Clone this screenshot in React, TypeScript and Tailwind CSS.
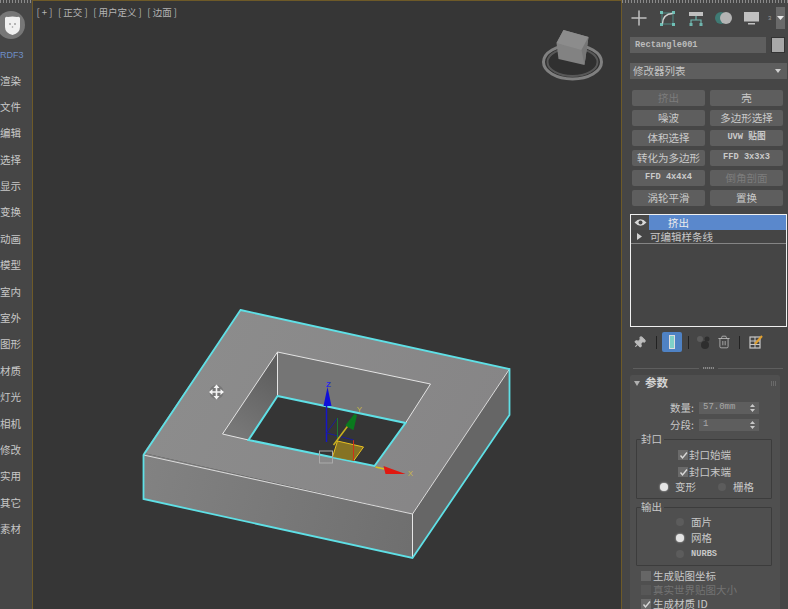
import React from 'react';
import { Plus, Pin, Trash2 } from 'lucide-react';

const menuItems = ['渲染', '文件', '编辑', '选择', '显示', '变换', '动画', '模型', '室内', '室外', '图形', '材质', '灯光', '相机', '修改', '实用', '其它', '素材'];

const modifierButtons: [string, boolean][] = [
  ['挤出', true], ['壳', false],
  ['噪波', false], ['多边形选择', false],
  ['体积选择', false], ['UVW 贴图', false],
  ['转化为多边形', false], ['FFD 3x3x3', false],
  ['FFD 4x4x4', false], ['倒角剖面', true],
  ['涡轮平滑', false], ['置换', false],
];

const Radio = ({ on }: { on?: boolean }) => (
  <span className={`block w-2 h-2 rounded-full ${on ? 'bg-[#e4e4e4] shadow-[0_0_2px_#ddd]' : 'bg-[#5c5c5c]'}`}></span>
);

const Check = () => (
  <span className="w-2.5 h-2.5 bg-[#6a6a6a] flex items-center justify-center shrink-0">
    <svg width="9" height="9" viewBox="0 0 9 9"><path d="M1.5 4.5 L3.5 7 L8 1.5" stroke="#d8d8d8" strokeWidth="1.4" fill="none" /></svg>
  </span>
);

const Spinner = ({ value }: { value: string }) => (
  <div className="w-[60px] h-[12px] bg-[#5e5e5e] flex items-center justify-between pl-1 pr-1 text-[9px] text-[#a8a8a8] font-['Liberation_Mono']">
    <span>{value}</span>
    <svg width="5" height="10" viewBox="0 0 5 10"><path d="M0 4 L2.5 1 L5 4 Z M0 6 L2.5 9 L5 6 Z" fill="#c8c8c8" /></svg>
  </div>
);

const Scene = () => (
  <svg viewBox="33 0 587 609" className="w-full h-full block">
    <defs>
      <linearGradient id="frontWall" x1="143" y1="470" x2="412" y2="540" gradientUnits="userSpaceOnUse">
        <stop offset="0" stopColor="#828282" />
        <stop offset="1" stopColor="#6f6f6f" />
      </linearGradient>
      <linearGradient id="topFace" x1="200" y1="340" x2="480" y2="480" gradientUnits="userSpaceOnUse">
        <stop offset="0" stopColor="#8c8c8c" />
        <stop offset="1" stopColor="#868586" />
      </linearGradient>
      <linearGradient id="holeLeft" x1="235" y1="430" x2="275" y2="370" gradientUnits="userSpaceOnUse">
        <stop offset="0" stopColor="#777777" />
        <stop offset="1" stopColor="#5f5f5f" />
      </linearGradient>
    </defs>

    {/* view cube */}
    <g className="blur-[0.7px]">
      <ellipse cx="572" cy="62" rx="29" ry="17" fill="#303030" stroke="#808080" strokeWidth="3" />
      <ellipse cx="572" cy="62" rx="25" ry="14" fill="none" stroke="#585858" strokeWidth="2" />
      <path d="M563 30 L588 37 L584 65 L558 59 L556 43 Z" fill="#828282" />
      <path d="M563 30 L588 37 L581 50 L556 43 Z" fill="#8c8c8c" />
      <path d="M581 50 L588 37 L584 65 Z" fill="#767676" />
    </g>

    {/* outer walls */}
    <path d="M143 453 L412 514 L412 558 L143 499 Z" fill="url(#frontWall)" />
    <path d="M412 514 L509 369 L509 415 L412 558 Z" fill="#666666" />
    {/* top face */}
    <path d="M240 310 L509 369 L412 514 L143 453 Z" fill="url(#topFace)" />
    {/* hole */}
    <path d="M277 352 L430 384 L405 423 L277 396 Z" fill="#757575" />
    <path d="M277 352 L277 396 L248 440 L222 434 Z" fill="url(#holeLeft)" />
    <path d="M277 396 L405 423 L374 466 L248 440 Z" fill="#353535" />
    <path d="M277 396 L277 352 L430 384 L405 423 M277 352 L222 434 L248 440" stroke="#e4e4e4" strokeWidth="1" fill="none" />
    <path d="M277 396 L405 423 L374 466 L248 440 Z" stroke="#5fe0e6" strokeWidth="2" fill="none" />
    {/* outlines */}
    <path d="M143 455 L412 514 L509 369" stroke="#dcdcdc" strokeWidth="1" fill="none" />
    <path d="M412 514 L412 558" stroke="#e6e6e6" strokeWidth="1" fill="none" />
    <path d="M240 310 L509 369 L509 415 L412 558 L143 499 L143 455 Z" stroke="#5fe0e6" strokeWidth="1.8" fill="none" />

    {/* gizmo */}
    <path d="M337 441 L363 447 L353 461 L332 457 Z" fill="#8f7a22" fillOpacity="0.9" />
    <path d="M337 441 L363 447 L353 461 M337 441 L332 457" stroke="#e8c020" fill="none" />
    <path d="M353 440 L353 461" stroke="#d03018" />
    <rect x="319" y="451" width="13" height="12" fill="none" stroke="#aaaaaa" />
    <path d="M326 400 L326 442" stroke="#1616c8" strokeWidth="1.5" />
    <path d="M326 433 L353 440 M326 433 L337 418" stroke="#1c1c9a" fill="none" />
    <path d="M337 418 L337 438" stroke="#1c7a30" fill="none" />
    <path d="M327 387 L323 406 L331 406 Z" fill="#1010d8" />
    <path d="M333 445 L348 425" stroke="#c8b020" strokeWidth="1.5" />
    <path d="M347 425 L355 415 L352 428 Z" fill="#0a7a1e" stroke="#0a7a1e" strokeWidth="3" />
    <path d="M375 467 L384 469" stroke="#d8c020" strokeWidth="1.5" />
    <path d="M383 466 L405 474 L385 474 Z" fill="#e01810" />
    <text x="328" y="387" fill="#2a2ae0" fontSize="8" fontFamily="Liberation Sans" fontWeight="bold" textAnchor="middle">Z</text>
    <text x="359" y="412" fill="#c8b848" fontSize="8" fontFamily="Liberation Sans" textAnchor="middle">Y</text>
    <text x="410" y="476" fill="#c8b848" fontSize="8" fontFamily="Liberation Sans" textAnchor="middle">X</text>

    {/* cursor */}
    <circle cx="216" cy="392" r="7" fill="#6a6a6a" fillOpacity="0.6" />
    <path d="M216 386 L216 398 M210 392 L222 392" stroke="#f4f4f4" strokeWidth="1.6" />
    <path d="M216 384.5 L213 388 L219 388 Z M216 399.5 L213 396 L219 396 Z M208.5 392 L212 389 L212 395 Z M223.5 392 L220 389 L220 395 Z" fill="#f4f4f4" />
  </svg>
);

export default function App() {
  return (
    <div className="w-[788px] h-[609px] flex overflow-hidden bg-[#363636] font-['Noto_Sans_CJK_SC','Liberation_Sans',sans-serif] text-[#c8c8c8]">
      {/* Left menu */}
      <aside className="w-[32px] shrink-0 bg-[#464646] flex flex-col items-start overflow-hidden">
        <div className="w-full h-[3px] bg-[repeating-linear-gradient(90deg,#8a8a8a_0,#8a8a8a_1px,#464646_1px,#464646_3px)]"></div>
        <div className="w-[28px] h-[28px] shrink-0 mt-[8px] -ml-[3px] rounded-full bg-[#777777] flex items-center justify-center">
          <svg width="17" height="19" viewBox="0 0 17 19" className="ml-0.5">
            <path d="M1 2 Q2 0 4 1 Q8.5 0 13 1 Q15 0 16 2 L16 11 Q16 17 8.5 19 Q1 17 1 11 Z" fill="#f0f0f0" />
            <circle cx="6" cy="8" r="0.8" fill="#666" />
            <circle cx="11" cy="8" r="0.8" fill="#666" />
            <circle cx="8.5" cy="11" r="0.8" fill="#999" />
          </svg>
        </div>
        <div className="mt-[10px] text-[9px] leading-3 text-[#6f8fc8] font-['Liberation_Sans'] whitespace-nowrap">RDF3</div>
        <div className="mt-[12.5px] flex flex-col gap-[12.4px]">
          {menuItems.map((item) => (
            <div key={item} className="text-[10.5px] leading-[14px] whitespace-nowrap">{item}</div>
          ))}
        </div>
      </aside>

      {/* Viewport */}
      <main className="relative w-[590px] shrink-0 bg-[#363636] border-x-[1.5px] border-[#6e5a28] shadow-[inset_0_1px_0_#6e5a28]">
        <div className="absolute left-[3.5px] top-[6px] flex gap-[5.5px] text-[9.5px] leading-3 text-[#b4b4b4] whitespace-nowrap">
          <span>[ + ]</span>
          <span>[ 正交 ]</span>
          <span>[ 用户定义 ]</span>
          <span>[ 边面 ]</span>
        </div>
        <Scene />
      </main>

      {/* Right panel */}
      <aside className="flex-1 bg-[#464646] flex flex-col pl-2 overflow-hidden text-[10.5px]">
        <div className="-ml-2 h-[3px] shrink-0 bg-[repeating-linear-gradient(90deg,#8a8a8a_0,#8a8a8a_1px,#464646_1px,#464646_3px)]"></div>
        <div className="flex items-center h-[24px] mt-[3px] text-[#c0c0c0]">
          <Plus size={24} strokeWidth={1.5} className="-ml-[3px]" />
          <svg width="15" height="15" viewBox="0 0 15 15" className="ml-[9px]">
            <path d="M2 2 H13 V13 H2 Z" fill="none" stroke="#4f8a84" strokeWidth="1" />
            <path d="M0 0 H3 V3 H0 Z M12 0 H15 V3 H12 Z M0 12 H3 V15 H0 Z M12 12 H15 V15 H12 Z" fill="#6fc0b6" />
            <path d="M2.5 12.5 Q3 3 12.5 2.5" fill="none" stroke="#d0d0d0" strokeWidth="1.4" />
          </svg>
          <svg width="14" height="15" viewBox="0 0 14 15" className="ml-[14px]">
            <rect x="0" y="1" width="14" height="4" fill="#c0c0c0" />
            <path d="M7 5 V9 M2 13 V9 H12 V13" stroke="#6fb5ad" fill="none" strokeWidth="1.2" />
            <path d="M0.5 12 H3.5 V15 H0.5 Z M10.5 12 H13.5 V15 H10.5 Z" fill="#6fb5ad" />
          </svg>
          <svg width="17" height="12" viewBox="0 0 17 12" className="ml-[12px]"><circle cx="6" cy="6" r="6" fill="#3f7a74" /><circle cx="11" cy="6" r="6" fill="#b4b4b4" /></svg>
          <svg width="15" height="13" viewBox="0 0 15 13" className="ml-[12px]"><rect x="0" y="0" width="15" height="9.5" fill="#c0c0c0" /><rect x="4" y="11" width="7" height="1.5" fill="#c0c0c0" /></svg>
          <span className="ml-[9px] text-[6px] text-[#999] font-['Liberation_Sans']">3</span>
          <span className="ml-[5px] w-[9px] h-[22px] bg-[#6a6a6a] flex items-center justify-center shrink-0">
            <svg width="7" height="4" viewBox="0 0 7 4"><path d="M0 0 H7 L3.5 4 Z" fill="#e8e8e8" /></svg>
          </span>
        </div>

        <div className="flex items-center gap-[5px] mt-[7px]">
          <div className="w-[136px] h-[16px] bg-[#5e5e5e] text-[8.7px] leading-[16px] px-[5px] text-[#bcbcbc] font-['Liberation_Mono'] font-bold">Rectangle001</div>
          <div className="w-[14px] h-[16px] bg-[#a8a8a8] border border-[#333]"></div>
        </div>

        <div className="mt-[10px] w-[157px] h-[17px] bg-[#5e5e5e] flex items-center justify-between pl-[3px] pr-[6px] text-[#c4c4c4]">
          <span>修改器列表</span>
          <svg width="6" height="4" viewBox="0 0 6 4"><path d="M0 0 H6 L3 4 Z" fill="#d0d0d0" /></svg>
        </div>

        <div className="mt-[11px] ml-[2px] w-[152px] grid grid-cols-[73px_73px] gap-x-[5px] gap-y-[4px]">
          {modifierButtons.map(([label, disabled]) => (
            <div key={label} className={`h-[16px] rounded-[2px] bg-[#5e5e5e] flex items-center justify-center whitespace-nowrap ${disabled ? 'text-[#7c7c7c]' : 'text-[#cacaca]'} ${label.startsWith('FFD') || label.startsWith('UVW') ? "font-['Liberation_Mono','Noto_Sans_CJK_SC'] text-[8.7px] font-bold" : 'text-[10.5px]'}`}>{label}</div>
          ))}
        </div>

        {/* Modifier stack */}
        <div className="mt-[8px] w-[157px] h-[113px] shrink-0 border border-[#f0f0f0] bg-[#454545]">
          <div className="flex h-[15px]">
            <div className="w-[18px] bg-[#4a4a4a] flex items-center justify-center">
              <svg width="13" height="9" viewBox="0 0 13 9"><path d="M0.5 4.5 Q6.5 -2 12.5 4.5 Q6.5 11 0.5 4.5 Z" fill="#d8d8d8" /><circle cx="6.5" cy="4.5" r="2" fill="#444" /></svg>
            </div>
            <div className="flex-1 bg-[#5a88cc] text-[#ececec] pl-[19px] leading-[15px]">挤出</div>
          </div>
          <div className="flex items-center h-[14px] border-b border-[#858585] leading-[14px]">
            <svg width="5" height="7" viewBox="0 0 5 7" className="ml-1.5 mr-2"><path d="M0 0 L5 3.5 L0 7 Z" fill="#d0d0d0" /></svg>
            <span>可编辑样条线</span>
          </div>
        </div>

        {/* Stack toolbar */}
        <div className="flex items-center h-[20px] mt-[5px] shrink-0 pl-[3px] text-[#bcbcbc]">
          <Pin size={13} className="rotate-45" fill="#bcbcbc" />
          <span className="w-px h-[13px] bg-[#222] ml-[10px]"></span>
          <span className="w-[20px] h-[20px] ml-[5px] bg-[#4f82c4] rounded-[2px] flex items-center justify-center">
            <span className="w-[6px] h-[14px] bg-[#7fd0c8] border border-[#ddd]"></span>
          </span>
          <span className="w-px h-[13px] bg-[#222] ml-[6px]"></span>
          <svg width="15" height="15" viewBox="0 0 15 15" className="ml-[7px]"><circle cx="4" cy="4" r="3" fill="#5c5c5c" /><circle cx="9" cy="10" r="4" fill="#2e2e2e" /><circle cx="11" cy="4" r="2.5" fill="#2e2e2e" /></svg>
          <Trash2 size={14} strokeWidth={1.4} className="ml-[6px]" />
          <span className="w-px h-[13px] bg-[#222] ml-[8px]"></span>
          <svg width="14" height="14" viewBox="0 0 14 14" className="ml-[9px]"><rect x="1" y="2" width="10" height="11" fill="none" stroke="#c8c8c8" strokeWidth="1.2" /><path d="M1 6 H11 M1 9.5 H11 M6 2 V13" stroke="#c8c8c8" /><path d="M6 9 L13 1" stroke="#e0a030" strokeWidth="2" /></svg>
        </div>

        {/* Divider */}
        <div className="flex items-center gap-1 mt-[15px] ml-[3px] w-[150px] shrink-0">
          <span className="flex-1 h-px bg-[#5e5e5e]"></span>
          <span className="w-[11px] h-[2px] bg-[repeating-linear-gradient(90deg,#888_0,#888_1px,#555_1px,#555_2px)]"></span>
          <span className="flex-1 h-px bg-[#5e5e5e]"></span>
        </div>

        {/* Parameters */}
        <div className="mt-[6px] w-[150px] bg-[#4f4f4f] rounded-t-[2px] flex-1">
          <div className="flex items-center justify-between h-[16px] pl-[4px] pr-[4px] text-[11.5px] font-bold text-[#d4d4d4]">
            <span className="flex items-center">
              <svg width="6" height="5" viewBox="0 0 6 5" className="mr-[5px]"><path d="M0 0 H6 L3 5 Z" fill="#b0b0b0" /></svg>
              参数
            </span>
            <span className="w-[5px] h-[5px] bg-[repeating-linear-gradient(90deg,#6a6a6a_0,#6a6a6a_1px,#4f4f4f_1px,#4f4f4f_2px)]"></span>
          </div>
          <div className="flex items-center justify-end gap-[5px] mt-[10px] pr-[21px] h-[14px]">
            <span>数量:</span>
            <Spinner value="57.0mm" />
          </div>
          <div className="flex items-center justify-end gap-[5px] mt-[3px] pr-[21px] h-[14px]">
            <span>分段:</span>
            <Spinner value="1" />
          </div>

          <div className="relative ml-[6px] w-[136px] mt-[7px] h-[60px] border border-[#3c3c3c] rounded-[1px] pt-[8px] leading-[14px]">
            <span className="absolute -top-[8px] left-[4px] bg-[#4f4f4f] pr-0.5">封口</span>
            <div className="flex items-center gap-[1px] pl-[41px]"><Check />封口始端</div>
            <div className="flex items-center gap-[1px] pl-[41px] mt-[3px]"><Check />封口末端</div>
            <div className="flex items-center pl-[23px] mt-[1px]">
              <Radio on /><span className="ml-[7px] mr-[22px]">变形</span>
              <Radio /><span className="ml-[7px]">栅格</span>
            </div>
          </div>

          <div className="relative ml-[6px] w-[136px] mt-[8px] h-[59px] border border-[#3c3c3c] rounded-[1px] pt-[7px] leading-[14px]">
            <span className="absolute -top-[8px] left-[4px] bg-[#4f4f4f] pr-0.5">输出</span>
            <div className="flex items-center pl-[39px]"><Radio /><span className="ml-[7px]">面片</span></div>
            <div className="flex items-center pl-[39px] mt-[2px]"><Radio on /><span className="ml-[7px]">网格</span></div>
            <div className="flex items-center pl-[39px] mt-[2px]"><Radio /><span className="ml-[7px] text-[8.7px] font-['Liberation_Mono'] font-bold">NURBS</span></div>
          </div>

          <div className="mt-[3px] pl-[11px] leading-[14px] whitespace-nowrap">
            <div className="flex items-center gap-[2px]"><span className="w-2.5 h-2.5 bg-[#666]"></span>生成贴图坐标</div>
            <div className="flex items-center gap-[2px] text-[#737373]"><span className="w-2.5 h-2.5 bg-[#575757]"></span>真实世界贴图大小</div>
            <div className="flex items-center gap-[2px] h-[10px] mt-[2px] leading-[10px]"><Check />生成材质 ID</div>
          </div>
        </div>
      </aside>
    </div>
  );
}
